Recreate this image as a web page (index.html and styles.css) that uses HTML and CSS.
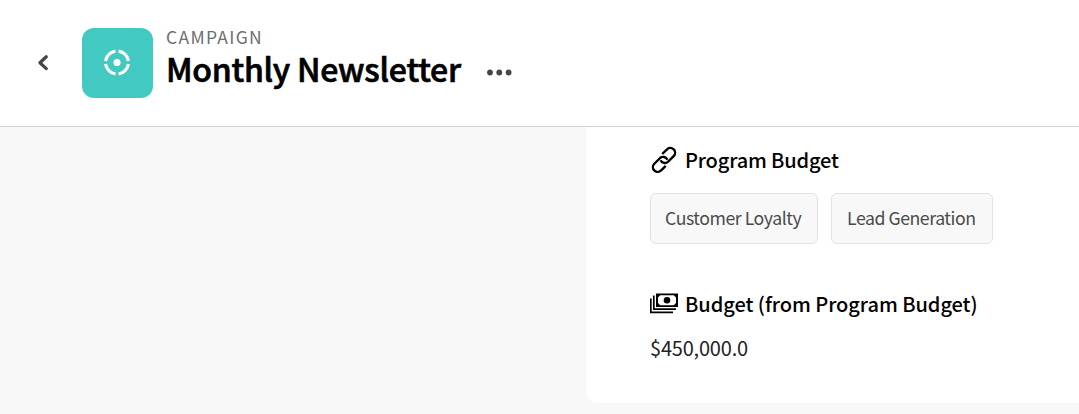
FILE: index.html
```html
<!DOCTYPE html>
<html lang="en">
<head>
<meta charset="utf-8">
<title>Monthly Newsletter</title>
<link rel="stylesheet" href="styles.css">
</head>
<body>
<header class="header">
  <button class="back" aria-label="Back"><svg width="14" height="20" viewBox="0 0 14 20"><path d="M10.3 3.8 3.9 9.7 10.3 15.6" fill="none" stroke="#464646" stroke-width="3.2" stroke-linecap="round" stroke-linejoin="round"/></svg></button>
  <div class="tile"><svg width="29" height="28" viewBox="0 0 29 28"><circle cx="14" cy="13.5" r="3.6" fill="#fff"/><path d="M15.5 2.1A11.5 11.5 0 0 1 25.4 12M25.4 15A11.5 11.5 0 0 1 15.5 24.9M12.5 24.9A11.5 11.5 0 0 1 2.6 15M2.6 12A11.5 11.5 0 0 1 12.5 2.1" fill="none" stroke="#fff" stroke-width="3.1"/></svg></div>
  <div class="heading">
    <div class="eyebrow">CAMPAIGN</div>
    <h1 class="title">Monthly Newsle<span class="joined">t</span>ter</h1>
  </div>
  <button class="more" aria-label="More"><svg width="26" height="8" viewBox="0 0 26 8"><g fill="#464646"><circle cx="4" cy="4.5" r="2.9"/><circle cx="13.3" cy="4.5" r="2.9"/><circle cx="22.6" cy="4.5" r="2.9"/></g></svg></button>
</header>
<main class="content">
  <section class="panel">
    <h2 class="label"><svg class="icon" width="28" height="28" viewBox="0 0 28 28"><g fill="none" stroke="#000" stroke-width="2.4" stroke-linecap="butt"><path d="M12.2 8 16.8 3.6A4.6 4.6 0 0 1 23.9 9.9L17.9 15.9A4.6 4.6 0 0 1 10.6 14.2"/><path d="M15.7 19.9 11.2 24.3A4.6 4.6 0 0 1 4.1 18L10.1 12A4.6 4.6 0 0 1 17.4 13.7"/></g></svg><span class="program">Program Budget</span></h2>
    <div class="chips">
      <span class="chip loyalty">Customer Loyalty</span>
      <span class="chip lead">Lead Generation</span>
    </div>
    <h2 class="label second"><svg class="icon" width="28" height="28" viewBox="0 0 28 28"><path fill-rule="evenodd" d="M6 3.5H28V17H6ZM10.2 5.3 8 7.5V13L10.2 15.2H23.8L26 13V7.5L23.8 5.3Z"/><circle cx="17" cy="10.3" r="3.3"/><path d="M3.8 5.5V19.2H26M.8 8.5V22.4H23" fill="none" stroke="#000" stroke-width="1.7"/></svg><span class="budget">Budget (from Program Budget)</span></h2>
    <div class="value">$450,000.0</div>
  </section>
</main>
</body>
</html>
```
FILE: styles.css
```css
* { box-sizing: border-box; }
body {
  margin: 0;
  height: 414px;
  overflow: hidden;
  background: #f8f8f8;
  color: #000;
  font-family: "Noto Sans CJK SC", "Open Sans", sans-serif;
}
svg { display: block; flex: none; }
button { border: 0; padding: 0; background: none; }
.header {
  display: flex;
  height: 127px;
  background: #fff;
  border-bottom: 1px solid #d3d3d3;
}
.back { width: 14px; height: 20px; margin: 53px 0 0 36px; }
.tile {
  display: grid;
  place-items: center;
  width: 71px;
  height: 70px;
  margin: 28px 13px 0 32px;
  border-radius: 12px;
  background: #42c9c2;
}
.heading { width: 320px; padding-top: 25px; white-space: nowrap; }
.eyebrow { font-size: 17.5px; line-height: 24px; color: #6e6e6e; letter-spacing: 1.3px; }
.title {
  margin: 0;
  font-size: 32px;
  font-weight: 500;
  line-height: 39px;
  letter-spacing: -0.25px;
  -webkit-text-stroke: 0.7px #000;
}
.joined { letter-spacing: -1px; }
.more { width: 26px; height: 8px; margin-top: 68px; }
.content { height: 287px; padding-left: 586px; }
.panel {
  height: 276px;
  padding: 17px 0 0 64px;
  border-bottom-left-radius: 12px;
  background: #fff;
}
.label {
  display: flex;
  align-items: center;
  gap: 7px;
  height: 32px;
  margin: 0;
  font-size: 20px;
  font-weight: 500;
  line-height: 32px;
  white-space: nowrap;
}
.program { letter-spacing: -0.15px; }
.budget { letter-spacing: -0.04px; }
.chips { display: flex; gap: 13px; margin-top: 17px; }
.chip {
  height: 51px;
  padding-left: 14px;
  border: 1px solid #e2e2e2;
  border-radius: 6px;
  background: #f8f8f8;
  color: #4b4b4b;
  font-size: 17.7px;
  line-height: 47px;
  letter-spacing: -0.46px;
  white-space: nowrap;
}
.loyalty { width: 168px; }
.lead { width: 162px; padding-left: 15px; }
.second { margin-top: 44px; }
.value {
  margin-top: 13px;
  font-size: 20px;
  line-height: 30px;
  letter-spacing: -0.2px;
  color: #222;
}
```
